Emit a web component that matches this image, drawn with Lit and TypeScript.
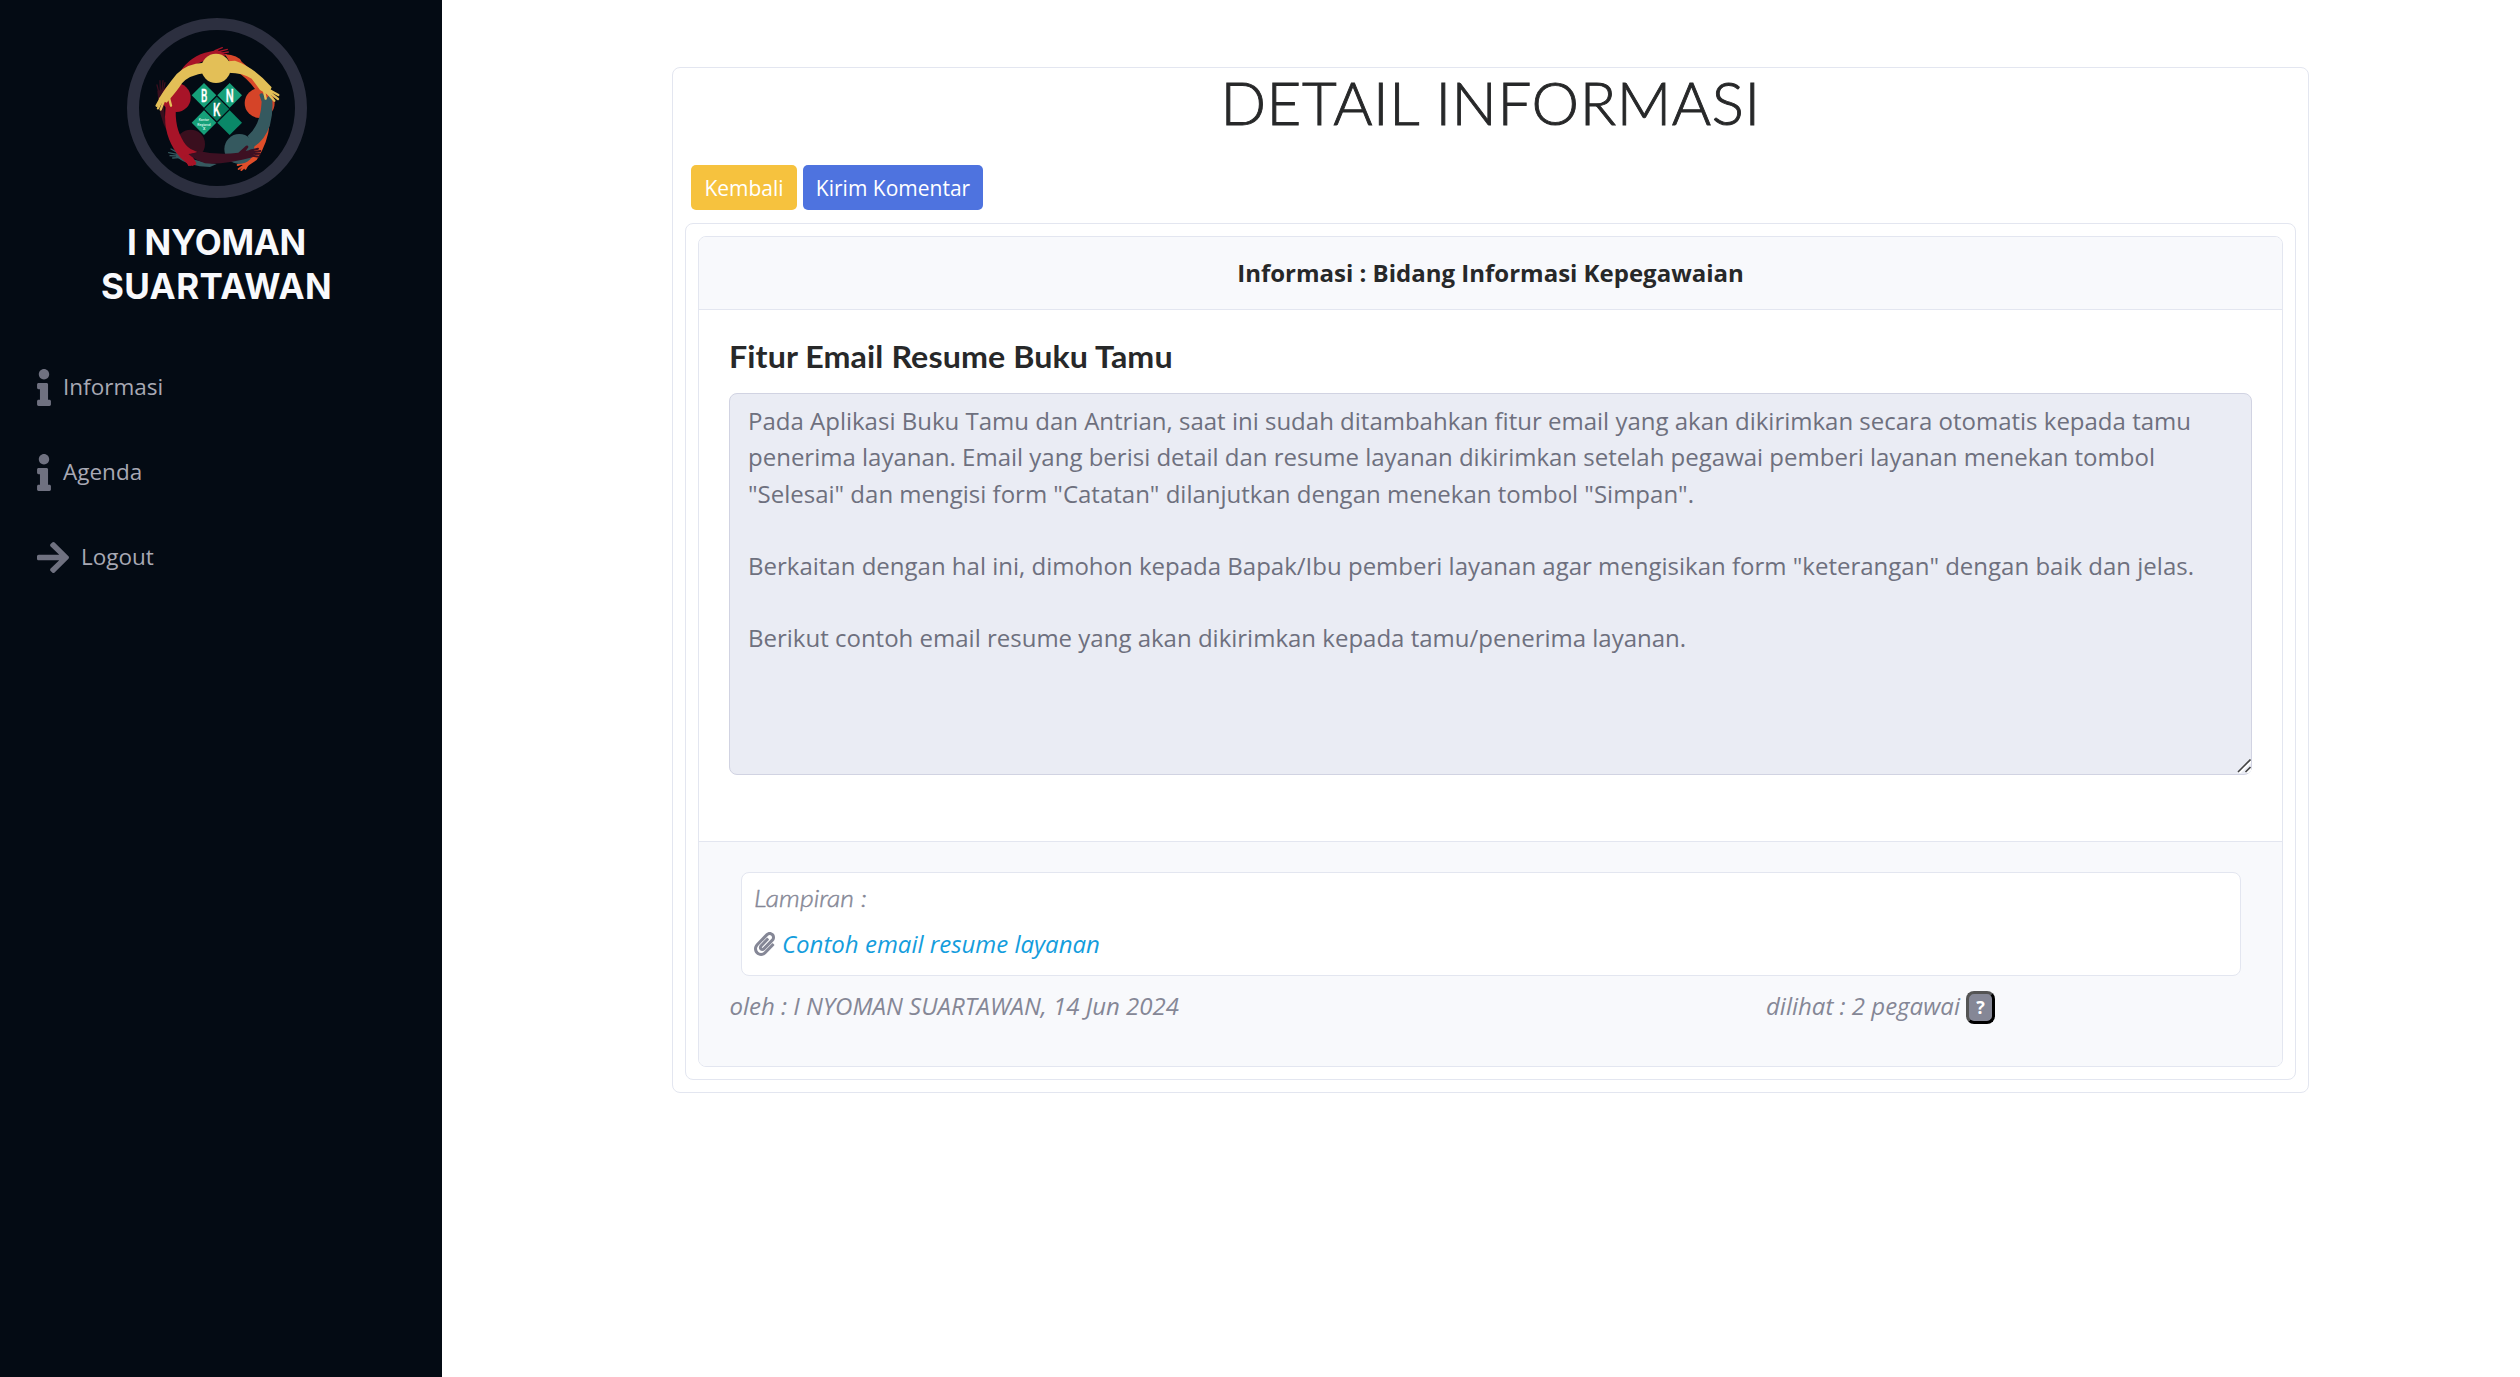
import { LitElement, html, css, svg } from "lit";
import { customElement } from "lit/decorators.js";

const infoIcon = html`<svg class="ico info" viewBox="0 0 192 512"><path d="M20 424.229h20V279.771H20c-11.046 0-20-8.954-20-20V212c0-11.046 8.954-20 20-20h112c11.046 0 20 8.954 20 20v212.229h20c11.046 0 20 8.954 20 20V492c0 11.046-8.954 20-20 20H20c-11.046 0-20-8.954-20-20v-47.771c0-11.046 8.954-20 20-20zM96 0C56.235 0 24 32.235 24 72s32.235 72 72 72 72-32.235 72-72S135.764 0 96 0z"/></svg>`;
const arrowIcon = html`<svg class="ico arrow" viewBox="0 0 448 512"><path d="M190.500 66.900l22.200-22.200c9.400-9.400 24.600-9.400 33.900 0L441 239c9.400 9.400 9.400 24.600 0 33.900L246.600 467.300c-9.400 9.400-24.600 9.400-33.900 0l-22.200-22.200c-9.500-9.500-9.300-25 .4-34.300L311.400 296H24c-13.300 0-24-10.700-24-24v-32c0-13.300 10.700-24 24-24h287.400L190.900 101.200c-9.800-9.300-10-24.800-.4-34.300z"/></svg>`;
const clipIcon = html`<svg class="clip" viewBox="0 0 448 512"><path fill="currentColor" d="M43.246 466.142c-58.430-60.289-57.341-157.511 1.386-217.581L254.392 34c44.316-45.332 116.351-45.336 160.671 0 43.890 44.894 43.943 117.329 0 162.276L232.214 383.128c-29.855 30.537-78.633 30.111-107.982-.998-28.275-29.970-27.368-77.473 1.452-106.953l143.743-146.835c6.182-6.314 16.312-6.422 22.626-.241l22.861 22.379c6.315 6.182 6.422 16.312.241 22.626L171.427 319.927c-4.932 5.045-5.236 13.428-.648 18.292 4.372 4.634 11.245 4.711 15.688.165l182.849-186.851c19.613-20.062 19.613-52.725-.011-72.798-19.189-19.627-49.957-19.637-69.154 0L90.390 293.295c-34.763 35.560-35.299 93.120-1.191 128.313 34.010 35.093 88.985 35.137 123.058.286l172.060-175.999c6.177-6.319 16.307-6.433 22.626-.256l22.877 22.364c6.319 6.177 6.434 16.307.256 22.626l-172.060 175.998c-59.576 60.938-155.943 60.216-214.770-.485z"/></svg>`;

const diamond = (cx: number, cy: number, fill: string) =>
  svg`<path fill=${fill} d="M${cx} ${cy - 37}l37 37-37 37-37-37z"/>`;

const logo = html`<svg class="logo" viewBox="51 54 540 540">
  <g stroke-linecap="round" stroke-linejoin="round">
    <path fill="#a81428" d="M203 228Q230 175 285 158L322 150 350 165 300 178Q250 190 215 226Z"/>
    <path fill="none" stroke="#a81428" stroke-width="4" d="M315 152l22-9M322 156l30-8M325 161l30-5M325 166l24-2"/>
    <path fill="#3a0f1e" d="M142 272L163 268Q158 330 172 395 146 350 142 272Z"/>
    <path fill="none" stroke="#3a0f1e" stroke-width="4" d="M146 275l-5-20M151 272l-1-30M156 272l3-30M160 272l5-24"/>
    <path fill="#d9482a" d="M345 163Q385 165 395 185L430 215Q450 245 465 280L455 300Q425 240 375 212Z"/>
    <circle cx="449" cy="309" r="45" fill="#d54428"/>
    <path fill="#e04e2a" d="M479 370Q474 430 440 480L410 500 384 490Q420 470 440 425Z"/>
    <path fill="none" stroke="#e04e2a" stroke-width="6" d="M405 488l-22 7M408 492l-22 15M410 495l-16 15M414 492l-8 14"/>
    <path fill="#35595f" d="M200 455Q250 485 320 492L300 501Q235 500 198 470Z"/>
    <path fill="none" stroke="#35595f" stroke-width="4" d="M203 458l-20-11M201 463l-25-5M202 468l-22-1M206 473l-18 1"/>
    <circle cx="388" cy="447" r="45" fill="#35595f"/>
    <circle cx="242" cy="432" r="43" fill="#3a0f1e"/>
    <circle cx="199" cy="293" r="43" fill="#a81428"/>
    <path fill="#35595f" d="M448 284Q456 276 461 284L467 298 485 278Q492 330 480 375 465 420 432 440L413 408Q452 375 455 305Z"/>
    <path fill="#a81428" d="M168 300H200Q190 370 215 415 226 438 242 447L262 456 244 461 258 494 240 498 212 474Q165 420 165 350Z"/>
    <path fill="none" stroke="#a81428" stroke-width="6" d="M225 470l12 25M232 468l16 26M240 465l16 24"/>
    <path fill="#3d1022" d="M262 452Q325 467 385 458L408 437Q416 434 415 442L407 453 430 448 428 472Q340 495 285 490 255 480 235 462L262 458Z"/>
    <path fill="none" stroke="#3d1022" stroke-width="6" d="M420 452l24-6M425 457l26-4M425 462l25-1M425 467l21 3"/>
    <path fill="#e3bf57" d="M282 188Q230 190 200 222 165 265 146 297L170 308Q200 275 216 250 235 225 290 218H355Q400 218 425 236L450 270 475 285 485 262Q430 200 375 182Z"/>
    <path fill="none" stroke="#e3bf57" stroke-width="7" d="M152 295l-12 22M156 300l-12 25M162 302l-10 27M176 290l7 27M478 270l27 15M477 276l27 21M473 280l20 22M462 272l5 24"/>
    <circle cx="318" cy="205" r="44" fill="#e3bf57"/>
  </g>
  ${diamond(282, 286, "#16a079")}${diamond(359, 286, "#16a079")}
  ${diamond(320.5, 327, "#067a5c")}${diamond(282, 368, "#16a079")}${diamond(359, 368, "#0a8868")}
  <g class="lt">
    <text x="273" y="305" textLength="19" lengthAdjust="spacingAndGlyphs">B</text>
    <text x="347" y="305" textLength="24" lengthAdjust="spacingAndGlyphs">N</text>
    <text x="309" y="347" textLength="22" lengthAdjust="spacingAndGlyphs">K</text>
  </g>
  <g class="tiny">
    <text x="266" y="363" textLength="31" lengthAdjust="spacingAndGlyphs">Kantor</text>
    <text x="262" y="377" textLength="40" lengthAdjust="spacingAndGlyphs">Regional</text>
    <text x="278" y="389">X</text>
  </g>
</svg>`;

const BODY = `Pada Aplikasi Buku Tamu dan Antrian, saat ini sudah ditambahkan fitur email yang akan dikirimkan secara otomatis kepada tamu penerima layanan. Email yang berisi detail dan resume layanan dikirimkan setelah pegawai pemberi layanan menekan tombol "Selesai" dan mengisi form "Catatan" dilanjutkan dengan menekan tombol "Simpan".

Berkaitan dengan hal ini, dimohon kepada Bapak/Ibu pemberi layanan agar mengisikan form "keterangan" dengan baik dan jelas.

Berikut contoh email resume yang akan dikirimkan kepada tamu/penerima layanan.`;

@customElement("app-root")
export class AppRoot extends LitElement {
  static styles = css`
    :host { display: flex; width: 100%; height: 1377px; overflow: hidden; background: #fff;
      font: 24px/36px "Open Sans", sans-serif; color: #272829; }
    * { box-sizing: border-box; }
    .side { width: 442px; flex: none; background: #040b14; padding: 18px 22px 0; }
    .avatar { width: 180px; height: 180px; margin: 0 auto 0 105px; border: 12px solid #2c2f3f; border-radius: 50%; }
    .logo { display: block; width: 180px; height: 180px; margin: -12px; }
    .lt { font: 500 53px "Roboto", sans-serif; fill: #fff; stroke: #fff; stroke-width: 1; }
    .tiny { font: 500 13px "Roboto", sans-serif; fill: #d8f5ea; }
    .name { margin: 22px 0 0; padding-right: 9px; text-align: center; color: #f8f9fc;
      font: 700 35px/44px "Inter", sans-serif; }
    .n1 { letter-spacing: -.3px; }
    .n2 { letter-spacing: .4px; }
    nav { margin-top: 61px; padding-left: 15px; display: flex; flex-direction: column; gap: 49px; }
    .item { display: flex; align-items: center; height: 36px; font-size: 22.500px; color: #a8a9b4; }
    .ico { fill: #6f7180; flex: none; }
    .info { width: 14px; height: 37px; margin-right: 12px; }
    .arrow { width: 32px; height: 37px; margin-right: 12px; }
    main { flex: 1; padding: 67px 211px 0 230px; }
    .card { border: 1px solid #e3e6f0; border-radius: 8px; background: #fff; }
    .outer { height: 1026px; padding: 0 12px; }
    h1 { margin: 0; height: 97px; text-align: center; font: 300 60px/69px "Lato", sans-serif; letter-spacing: .6px; -webkit-text-stroke: .9px #272829; }
    .btns { display: flex; gap: 6px; padding-left: 6px; height: 58px; }
    .btn { height: 45px; border-radius: 5px; color: #fff; font-size: 21px; line-height: 46px; text-align: center; }
    .yellow { width: 106px; background: #f6c23e; }
    .blue { width: 180px; background: #4e73df; }
    .mid { height: 857px; padding: 12px; }
    .inner { height: 831px; overflow: hidden; display: flex; flex-direction: column; }
    .head { height: 73px; line-height: 71px; text-align: center; font-weight: 700; background: #f8f9fc; border-bottom: 1px solid #e3e6f0; }
    .body { flex: 1; padding: 27px 30px 0; }
    h2 { margin: 0; height: 56px; font: 700 30px/38px "Lato", sans-serif; letter-spacing: .1px; transform: scaleX(1.073); transform-origin: 0 0; width: 480px; white-space: nowrap; }
    .area { position: relative; width: 1523px; height: 382px; }
    textarea { display: block; width: 100%; height: 100%; margin: 0; padding: 9.400px 18px; border: 1px solid #d1d3e2;
      border-radius: 8px; background: #eaecf4; color: #6e707e; font: 24px/36.100px "Open Sans", sans-serif; outline: 0; resize: none; overflow: hidden; }
    .grip { position: absolute; right: 1px; bottom: 2px; width: 14px; height: 14px; }
    .foot { height: 225px; background: #f8f9fc; border-top: 1px solid #e3e6f0; padding: 30px 30px 0; font-style: italic; color: #858796; }
    .att { height: 104px; margin: 0 11px 0 12px; padding: 7px 12px; }
    .lamp { width: 200px; font: italic 300 24px/35px "Lato", sans-serif; height: 46px; transform: scaleX(1.110); transform-origin: 0 0; -webkit-text-stroke: .4px #858796; }
    .file { display: flex; align-items: center; }
    .file a { color: #149ddd; margin-left: 7px; }
    .clip { width: 21px; height: 24px; }
    .meta { display: flex; align-items: center; height: 36px; margin-top: 12px; }
    .by { width: 1037px; padding-left: .5px; }
    .badge { width: 29px; height: 33px; margin: 2px 0 0 6px; border: 3px outset #000; border-radius: 8px; background: #858796;
      color: #fff; padding: 0; font: 700 18px/27px "Open Sans", sans-serif; text-align: center; }
  `;
  render() {
    return html`
      <aside class="side">
        <div class="avatar">${logo}</div>
        <div class="name"><span class="n1">I NYOMAN</span><br /><span class="n2">SUARTAWAN</span></div>
        <nav>
          <div class="item">${infoIcon}<span>Informasi</span></div>
          <div class="item">${infoIcon}<span>Agenda</span></div>
          <div class="item">${arrowIcon}<span>Logout</span></div>
        </nav>
      </aside>
      <main>
        <div class="card outer">
          <h1>DETAIL INFORMASI</h1>
          <div class="btns"><div class="btn yellow">Kembali</div><div class="btn blue">Kirim Komentar</div></div>
          <div class="card mid">
            <div class="card inner">
              <div class="head">Informasi : Bidang Informasi Kepegawaian</div>
              <div class="body">
                <h2>Fitur Email Resume Buku Tamu</h2>
                <div class="area">
                  <textarea readonly .value=${BODY}></textarea>
                  <svg class="grip" viewBox="0 0 14 14"><path d="M1.500 13L13.500 1M9 13l4.500-4.500" stroke="#fff" stroke-width="2" transform="translate(1 1)" fill="none"/><path d="M1 13L13.500 .5M8.500 13l5-5" stroke="#444" stroke-width="1.600" fill="none"/></svg>
                </div>
              </div>
              <div class="foot">
                <div class="card att">
                  <div class="lamp">Lampiran :</div>
                  <div class="file">${clipIcon}<a>Contoh email resume layanan</a></div>
                </div>
                <div class="meta"><span class="by">oleh : I NYOMAN SUARTAWAN, 14 Jun 2024</span><span>dilihat : 2 pegawai</span><button class="badge">?</button></div>
              </div>
            </div>
          </div>
        </div>
      </main>`;
  }
}
